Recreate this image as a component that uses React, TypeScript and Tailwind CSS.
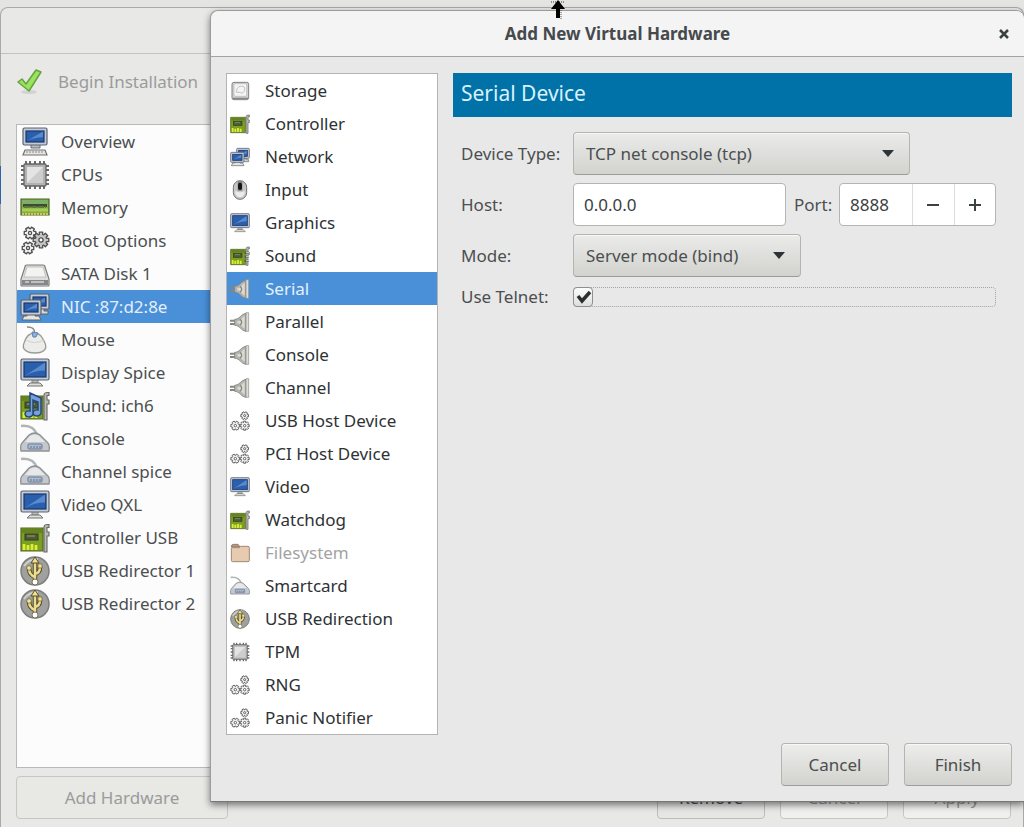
import { useState } from 'react'
import type { ReactNode } from 'react'
import clsx from 'clsx'

// toothed wheel outline, centred on (cx, cy)
function gearPath(cx: number, cy: number, r: number, teeth: number) {
  const inner = r * 0.72
  const pts: string[] = []
  for (let i = 0; i < teeth; i++) {
    const a = (i / teeth) * Math.PI * 2
    const step = Math.PI / teeth
    const corners: [number, number][] = [
      [a - step * 0.55, r],
      [a + step * 0.55, r],
      [a + step * 0.75, inner],
      [a + step * 1.25, inner],
    ]
    corners.forEach(([ang, rad]) => {
      pts.push(`${(cx + Math.cos(ang) * rad).toFixed(2)} ${(cy + Math.sin(ang) * rad).toFixed(2)}`)
    })
  }
  return `M${pts.join('L')}Z`
}

function Gear({ cx, cy, r, teeth, fill = '#f2f2f2' }: { cx: number; cy: number; r: number; teeth: number; fill?: string }) {
  return (
    <g stroke="#4f4f4f" strokeWidth="1.3" strokeLinejoin="round">
      <path d={gearPath(cx, cy, r, teeth)} fill={fill} />
      <circle cx={cx} cy={cy} r={r * 0.26} fill="#ffffff" />
    </g>
  )
}

function Screen({ x, y, w, h }: { x: number; y: number; w: number; h: number }) {
  return (
    <g>
      <rect x={x} y={y} width={w} height={h} rx="1.5" fill="#c3cbd8" stroke="#5a6270" strokeWidth="1.2" />
      <rect x={x + 3} y={y + 3} width={w - 6} height={h - 6} fill="#2a5fae" stroke="#1b3768" strokeWidth="1.2" />
      <path d={`M${x + 3.6} ${y + h - 4}L${x + w - 4} ${y + 3.6}V${y + h * 0.55}Q${x + w * 0.5} ${y + h * 0.55} ${x + 3.6} ${y + h - 4}Z`} fill="#7aa6df" opacity="0.6" />
    </g>
  )
}

function Card() {
  return (
    <g>
      <path d="M1 5h22v23H1z" fill="#7c9f22" stroke="#52681a" strokeWidth="1.2" />
      <path d="M2 6h20v4H2z" fill="#64841f" />
      <rect x="5" y="11" width="13" height="6" fill="#4d5a36" stroke="#333b25" />
      <path d="M7 13h8" stroke="#93a37c" />
      <path d="M4 27v-6M8 27v-5M12 27v-6M16 27v-5" stroke="#dcee3a" strokeWidth="2.8" />
      <path d="M24 29V4q0-3 5-2.500v3h-2V9h2v4h-2v16z" fill="#b8bab5" stroke="#666862" strokeWidth="1.1" />
    </g>
  )
}

const icons: Record<string, ReactNode> = {
  computer: (
    <g>
      <path d="M11 17h9v4h-9z" fill="#b8bbbf" stroke="#6a6c70" />
      <Screen x={3} y={1} w={24} h={17} />
      <path d="M5 23h20l2 5H3z" fill="#e4e4e2" stroke="#70726f" strokeWidth="1.2" />
      <path d="M6 25h18" stroke="#8b8d8a" strokeDasharray="2 1" />
    </g>
  ),
  cpu: (
    <g>
      <path d="M1 6h28M1 10h28M1 15h28M1 20h28M1 24h28M6 1v28M10 1v28M15 1v28M20 1v28M24 1v28" stroke="#6b6b6b" strokeWidth="2" />
      <rect x="4" y="4" width="22" height="22" rx="1" fill="#b2b2b2" stroke="#666" strokeWidth="1.3" />
      <path d="M7 7h16v16H7z" fill="#e4e4e4" />
      <path d="M7 23L23 7v16z" fill="#cdcdcd" />
    </g>
  ),
  memory: (
    <g>
      <path d="M1 6h28v16H1z" fill="#86ad3c" stroke="#47642a" strokeWidth="1.2" />
      <path d="M2 7h26v4H2z" fill="#7fae66" />
      <path d="M3 11h24v3H3z" fill="#3c4a37" />
      <path d="M4 14h22" stroke="#5d7a3a" strokeWidth="2" strokeDasharray="6 1" />
      <path d="M2 17h26" stroke="#a5ce58" strokeWidth="3" />
      <path d="M2 21h26" stroke="#d6c454" strokeWidth="2" strokeDasharray="2 1" />
    </g>
  ),
  boot: (
    <g>
      <Gear cx={10} cy={7} r={6} teeth={6} />
      <Gear cx={8} cy={22} r={6} teeth={6} />
      <Gear cx={21} cy={14} r={8} teeth={8} fill="#c4c6c4" />
    </g>
  ),
  gears: (
    <g>
      <Gear cx={22} cy={7} r={6} teeth={6} />
      <Gear cx={8} cy={22} r={7} teeth={6} />
      <Gear cx={22} cy={22} r={7} teeth={8} />
    </g>
  ),
  disk: (
    <g>
      <path d="M7 6h16q2 0 2 2l4 12v6q0 1-1 1H2q-1 0-1-1v-6L5 8q0-2 2-2z" fill="#dcdcda" stroke="#7a7c78" strokeWidth="1.2" />
      <path d="M2 21h26v5H2z" fill="#85878a" />
      <path d="M7 8h16l3 10H4z" fill="#f3f3f2" stroke="#c2c4c0" />
      <path d="M5 23h4M11 23h13" stroke="#d4d4d2" strokeWidth="1.5" />
    </g>
  ),
  storage: (
    <g>
      <rect x="3" y="2" width="25" height="26" rx="3" fill="#d4d4d4" stroke="#808080" strokeWidth="1.5" />
      <rect x="6" y="4" width="19" height="19" rx="2" fill="#f4f4f4" stroke="#b5b5b5" />
      <path d="M10 17q-1-8 6-9t6 5-6 5M10 17h6" fill="none" stroke="#c2c2c2" strokeWidth="1.5" />
      <path d="M4 26h23" stroke="#888" strokeWidth="2" />
    </g>
  ),
  network: (
    <g>
      <path d="M17 16h7v3h4v3H15z" fill="#d8d9d6" stroke="#62645f" />
      <Screen x={10} y={2} w={19} h={15} />
      <path d="M7 22h8v2h4l2 4H2l2-4h3z" fill="#e4e4e2" stroke="#62645f" />
      <Screen x={1} y={8} w={20} h={15} />
    </g>
  ),
  mouse: (
    <g>
      <path d="M7 2q6 0 7 3t1 5" fill="none" stroke="#8b8d89" strokeWidth="1.5" />
      <path d="M15 8c5 0 7 4 10 10C28 25 22 28 15 28S1 25 4 18C6 11 9 8 15 8z" fill="#ececea" stroke="#9a9c97" strokeWidth="1.3" />
      <path d="M6 15q8 5 18 0" fill="none" stroke="#d0d2cd" />
      <path d="M12 7l6 1-2 4h-3z" fill="#8fb0dc" stroke="#6180ad" />
    </g>
  ),
  input: (
    <g>
      <rect x="5" y="1" width="20" height="28" rx="10" fill="#c6c6c6" stroke="#757575" strokeWidth="1.5" />
      <path d="M8 16q7 5 14 0v4q-2 6-7 6t-7-6z" fill="#ececec" />
      <path d="M15 2v14" stroke="#808080" strokeWidth="7" />
      <rect x="12" y="4" width="6" height="11" rx="3" fill="#161616" />
    </g>
  ),
  display: (
    <g>
      <path d="M12 21h6v4h-6z" fill="#b9bbb8" stroke="#8a8c87" />
      <path d="M10 25h10l3 3H7z" fill="#dededc" stroke="#72746f" />
      <Screen x={1} y={1} w={28} h={21} />
    </g>
  ),
  sound: (
    <g>
      <Card />
      <path d="M10 2l11 5v15a4 3 0 1 1-3-3v-8l-5-2v14a4 3 0 1 1-3-3z" fill="#74a0dc" stroke="#28477a" strokeWidth="1.5" />
    </g>
  ),
  soundcard: (
    <g>
      <Card />
      <path d="M22 10h6M22 16h6M22 22h6" stroke="#55574f" strokeWidth="3" />
      <path d="M24 10h5M24 16h5M24 22h5" stroke="#d5d6d1" strokeWidth="1.5" />
    </g>
  ),
  serialbox: (
    <g>
      <path d="M1 2c9-1 14 3 16 9" fill="none" stroke="#b1b4b6" strokeWidth="2.5" />
      <path d="M9 11q6-4 11 0l8 8q2 2 1 8H1q-1-6 1-8z" fill="#c4c8cc" stroke="#8d9196" strokeWidth="1.3" />
      <path d="M10 12q5-3 9 0l6 6H5z" fill="#e6e8ea" />
      <rect x="8" y="20" width="14" height="5" rx="1" fill="#a9bdd6" stroke="#6b788b" />
      <path d="M10 23h11" stroke="#5f7088" strokeDasharray="2 1" />
    </g>
  ),
  card: <Card />,
  usb: (
    <g>
      <circle cx="15" cy="15" r="14" fill="#a0a19e" stroke="#7d7e7b" strokeWidth="1.5" />
      <path d="M4 10q5-7 14-7" fill="none" stroke="#cfd0cd" strokeWidth="2" />
      <g fill="none" stroke="#554d2c" strokeWidth="4.5">
        <path d="M15 6v18M15 21q-6-2-6-9M15 18q5-1 5-7" />
      </g>
      <g fill="none" stroke="#ecdc8e" strokeWidth="2.5">
        <path d="M15 5v20M15 21q-6-2-6-9M15 18q5-1 5-7" />
      </g>
      <path d="M15 1l4 6h-8z" fill="#f3e38f" stroke="#554d2c" />
      <circle cx="9" cy="12" r="2.3" fill="#f3e38f" stroke="#554d2c" strokeWidth=".6" />
      <path d="M18 8h4v4h-4z" fill="#f3e38f" stroke="#554d2c" strokeWidth=".6" />
      <circle cx="15" cy="26" r="3" fill="#fff" stroke="#77745c" />
    </g>
  ),
  plug: (
    <g>
      <path d="M0 13h9M0 18h9" stroke="#858582" strokeWidth="3" />
      <path d="M7 11C15 11 16 3 24 2v27c-8-1-9-9-17-9z" fill="#b4b4b0" stroke="#83837f" strokeWidth="1.3" />
      <path d="M11 14c6-1 7-6 11-8v19c-4-2-5-7-11-8z" fill="#dadad5" />
      <path d="M15 11q5 4 0 9" stroke="#8c857a" strokeWidth="2" fill="none" />
      <path d="M24 1h4v28h-4z" fill="#dcdcd8" stroke="#8b8b86" />
    </g>
  ),
  folder: (
    <g>
      <path d="M2 6q0-4 3-4h7l3 4z" fill="#b79a80" stroke="#8a715c" strokeWidth="1.3" />
      <path d="M2 8q0-1 1-1h11l2-2h11q2 0 2 2v19q0 2-2 2H4q-2 0-2-2z" fill="#e7cbb0" stroke="#9b8069" strokeWidth="1.4" />
    </g>
  ),
}

function Icon({ name, className }: { name: string; className: string }) {
  return (
    <svg viewBox="0 0 30 30" className={clsx('shrink-0', className)} aria-hidden="true">
      {icons[name]}
    </svg>
  )
}

const vmHardware = [
  { label: 'Overview', icon: 'computer' },
  { label: 'CPUs', icon: 'cpu' },
  { label: 'Memory', icon: 'memory' },
  { label: 'Boot Options', icon: 'boot' },
  { label: 'SATA Disk 1', icon: 'disk' },
  { label: 'NIC :87:d2:8e', icon: 'network' },
  { label: 'Mouse', icon: 'mouse' },
  { label: 'Display Spice', icon: 'display' },
  { label: 'Sound: ich6', icon: 'sound' },
  { label: 'Console', icon: 'serialbox' },
  { label: 'Channel spice', icon: 'serialbox' },
  { label: 'Video QXL', icon: 'display' },
  { label: 'Controller USB', icon: 'card' },
  { label: 'USB Redirector 1', icon: 'usb' },
  { label: 'USB Redirector 2', icon: 'usb' },
]

const deviceTypes = [
  { label: 'Storage', icon: 'storage' },
  { label: 'Controller', icon: 'card' },
  { label: 'Network', icon: 'network' },
  { label: 'Input', icon: 'input' },
  { label: 'Graphics', icon: 'display' },
  { label: 'Sound', icon: 'soundcard' },
  { label: 'Serial', icon: 'plug' },
  { label: 'Parallel', icon: 'plug' },
  { label: 'Console', icon: 'plug' },
  { label: 'Channel', icon: 'plug' },
  { label: 'USB Host Device', icon: 'gears' },
  { label: 'PCI Host Device', icon: 'gears' },
  { label: 'Video', icon: 'display' },
  { label: 'Watchdog', icon: 'card' },
  { label: 'Filesystem', icon: 'folder', disabled: true },
  { label: 'Smartcard', icon: 'serialbox' },
  { label: 'USB Redirection', icon: 'usb' },
  { label: 'TPM', icon: 'cpu' },
  { label: 'RNG', icon: 'gears' },
  { label: 'Panic Notifier', icon: 'gears' },
]

function Combo({ id, options, className }: { id: string; options: string[]; className: string }) {
  return (
    <div className={clsx('relative', className)}>
      <select
        id={id}
        className="h-[43px] w-full appearance-none rounded border border-[#b4b4b0] border-b-[#9c9c98] bg-linear-to-b from-[#ebebea] to-[#d2d2ce] pl-3 pr-10 text-[#4b4f50] shadow-[inset_0_1px_0_#f8f8f8]"
      >
        {options.map(o => <option key={o}>{o}</option>)}
      </select>
      <svg viewBox="0 0 12 7" className="pointer-events-none absolute right-4 top-[18px] h-[7px] w-3" aria-hidden="true">
        <path d="M0 0h12L6 7z" fill="#2e3436" />
      </svg>
    </div>
  )
}

function DialogButton({ children }: { children: ReactNode }) {
  return (
    <button className="h-[43px] w-[108px] rounded border border-[#b4b4b0] border-b-[#9c9c98] bg-linear-to-b from-[#ededec] to-[#d2d2ce] text-[#4b4f50] shadow-[inset_0_1px_0_#f8f8f8]">
      {children}
    </button>
  )
}

function MainWindow() {
  const [selected, setSelected] = useState('NIC :87:d2:8e')

  return (
    <div className="flex flex-1 flex-col rounded-t-lg border border-b-0 border-[#a9a9a9] bg-[#e8e8e7]">
      <div className="h-[46px] border-b border-[#c2c2c0]" />

      {/* Toolbar */}
      <div className="flex h-[70px] items-start pl-[15px] pt-3">
        <button disabled className="flex h-8 items-center gap-4 text-[#9b9b9b]">
          <svg viewBox="0 0 26 26" className="h-[26px] w-[26px]" aria-hidden="true">
            <ellipse cx="13" cy="23" rx="8" ry="2" fill="#d3d3d1" />
            <path d="M2 13l4-3 4 5L20 1l5 2-12 19z" fill="#98e45c" stroke="#6aa044" strokeWidth="1.5" strokeLinejoin="round" />
          </svg>
          Begin Installation
        </button>
      </div>

      {/* Hardware list */}
      <ul className="mx-[15px] w-[212px] flex-1 border border-[#b9b9b7] bg-[#fcfcfc]">
        {vmHardware.map(h => (
          <li key={h.label}>
            <button
              onClick={() => setSelected(h.label)}
              className={clsx(
                'flex h-[33px] w-full items-center gap-[11px] whitespace-nowrap pl-[3px] text-left',
                selected === h.label ? 'bg-[#4a90d9] text-[#e4eefa]' : 'text-[#4b4f50]',
              )}
            >
              <Icon name={h.icon} className="h-[30px] w-[30px]" />
              {h.label}
            </button>
          </li>
        ))}
      </ul>

      <div className="flex justify-between pb-2 pl-[15px] pr-3 pt-2">
        <button disabled className="h-[43px] w-[212px] rounded border border-[#c6c6c2] bg-[#e8e8e5] text-[#9b9b9b]">
          Add Hardware
        </button>
        <div className="flex gap-[15px]">
          <button className="h-[43px] w-[108px] rounded border border-[#bcbcba] bg-[#e6e6e5] text-[#4b4f50]">Remove</button>
          <button disabled className="h-[43px] w-[108px] rounded border border-[#c6c6c4] bg-[#f0f0ef] text-[#9b9b9b]">Cancel</button>
          <button disabled className="h-[43px] w-[108px] rounded border border-[#c6c6c4] bg-[#f0f0ef] text-[#9b9b9b]">Apply</button>
        </div>
      </div>
    </div>
  )
}

function AddHardwareDialog() {
  const [selected, setSelected] = useState('Serial')
  const [host, setHost] = useState('0.0.0.0')
  const [port, setPort] = useState(8888)
  const [telnet, setTelnet] = useState(true)

  return (
    <div
      role="dialog"
      aria-labelledby="dialog-title"
      className="absolute left-[210px] right-0 top-[10px] rounded-t-lg border border-r-0 border-[#9c9c9c] border-b-[#777] bg-[#e8e8e8] shadow-[0_3px_7px_rgba(0,0,0,0.5)]"
    >
      <div className="flex h-[46px] items-center rounded-t-lg border-b border-[#a3a3a3] bg-[#f4f4f4] pl-7 pr-3">
        <h1 id="dialog-title" className="flex-1 text-center font-bold text-[#454a4c]">Add New Virtual Hardware</h1>
        <button aria-label="Close" className="flex h-5 w-4 items-center justify-center">
          <svg viewBox="0 0 10 10" className="h-[10px] w-[10px]" aria-hidden="true">
            <path d="M1 1l8 8M9 1L1 9" stroke="#3c4143" strokeWidth="2.5" />
          </svg>
        </button>
      </div>

      <div className="flex gap-[15px] pl-[15px] pr-3 pt-4">
        <ul className="w-[212px] shrink-0 border border-[#b4b4b2] bg-white">
          {deviceTypes.map(d => (
            <li key={d.label}>
              <button
                disabled={d.disabled}
                onClick={() => setSelected(d.label)}
                className={clsx(
                  'flex h-[33px] w-full items-center gap-[15px] whitespace-nowrap pl-[3px] text-left',
                  selected === d.label ? 'bg-[#4a90d9] text-[#e4f0fb]' : d.disabled ? 'text-[#a3a3a3]' : 'text-[#2e3234]',
                )}
              >
                <Icon name={d.icon} className="h-5 w-5" />
                {d.label}
              </button>
            </li>
          ))}
        </ul>

        <div className="min-w-0 flex-1">
          <h2 className="flex h-[44px] items-center bg-[#0072a8] pb-1 pl-2 text-[21px] text-[#d9f1fb]">Serial Device</h2>

          <div className="mt-[15px] grid grid-cols-[104px_1fr] items-center gap-x-2 gap-y-2 pl-2 pr-[18px] text-[#4b4f50]">
            <label htmlFor="device-type" className="whitespace-nowrap">Device Type:</label>
            <Combo id="device-type" className="w-[337px]" options={['TCP net console (tcp)', 'Pseudo TTY (pty)', 'UNIX socket (unix)']} />

            <label htmlFor="host">Host:</label>
            <div className="flex items-center gap-2">
              <input
                id="host"
                value={host}
                onChange={e => setHost(e.target.value)}
                className="h-[43px] w-[213px] rounded border border-[#b4b4b2] bg-white px-[10px] text-[#3c4042]"
              />
              <label htmlFor="port" className="w-[37px] whitespace-nowrap">Port:</label>
              <div className="flex h-[43px] w-[157px] overflow-hidden rounded border border-[#b4b4b2] bg-white">
                <input
                  id="port"
                  value={port}
                  onChange={e => setPort(Number(e.target.value) || 0)}
                  className="w-[72px] px-[10px] text-[#3c4042]"
                />
                <button aria-label="Decrease port" onClick={() => setPort(port - 1)} className="flex flex-1 items-center justify-center border-l border-[#dcdcdc]">
                  <svg viewBox="0 0 12 12" className="h-3 w-3" aria-hidden="true">
                    <path d="M0 6h12" stroke="#3c4143" strokeWidth="2" />
                  </svg>
                </button>
                <button aria-label="Increase port" onClick={() => setPort(port + 1)} className="flex flex-1 items-center justify-center border-l border-[#dcdcdc]">
                  <svg viewBox="0 0 12 12" className="h-3 w-3" aria-hidden="true">
                    <path d="M0 6h12M6 0v12" stroke="#3c4143" strokeWidth="2" />
                  </svg>
                </button>
              </div>
            </div>

            <label htmlFor="mode">Mode:</label>
            <Combo id="mode" className="w-[228px]" options={['Server mode (bind)', 'Client mode (connect)']} />

            <label htmlFor="telnet" className="whitespace-nowrap">Use Telnet:</label>
            <div className="relative flex h-5 items-center rounded-sm border border-dotted border-[#a5a5a5]">
              <input
                id="telnet"
                type="checkbox"
                checked={telnet}
                onChange={e => setTelnet(e.target.checked)}
                className="-ml-px h-5 w-5 appearance-none rounded-sm border border-[#8f8f8d] bg-linear-to-b from-[#fdfdfd] to-[#dededc]"
              />
              {telnet && (
                <svg viewBox="0 0 16 14" className="pointer-events-none absolute left-[2px] top-[2px] h-[14px] w-4" aria-hidden="true">
                  <path d="M2 6l4 5 8-9" fill="none" stroke="#2b2f31" strokeWidth="3.5" />
                </svg>
              )}
            </div>
          </div>
        </div>
      </div>

      <div className="flex justify-end gap-[15px] pb-[15px] pr-3 pt-2">
        <DialogButton>Cancel</DialogButton>
        <DialogButton>Finish</DialogButton>
      </div>
    </div>
  )
}

export default function App() {
  return (
    <div className="relative flex min-h-screen flex-col overflow-hidden bg-[#e4e4e3] pt-[7px] font-['Noto_Sans',sans-serif] text-[17px] leading-6">
      <MainWindow />
      <AddHardwareDialog />

      {/* edge of the window behind */}
      <div className="absolute left-0 top-[166px] h-[38px] w-px bg-[#2f62ab]" />

      {/* resize pointer */}
      <svg viewBox="0 0 16 20" className="pointer-events-none absolute left-[550px] top-0 h-5 w-4" aria-hidden="true">
        <path d="M1 2h14" stroke="#333" strokeDasharray="1 1" />
        <path d="M11 10v9" stroke="#555" strokeDasharray="1 1" />
        <path d="M8 0l7 9h-5v9H6V9H1z" fill="#000" />
      </svg>
    </div>
  )
}
